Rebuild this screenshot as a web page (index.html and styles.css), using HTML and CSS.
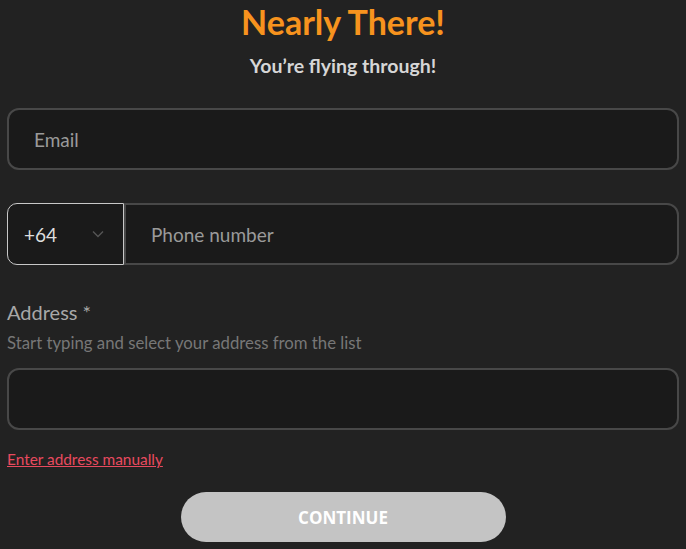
FILE: index.html
```html
<!DOCTYPE html>
<html lang="en">
<head>
    <meta charset="UTF-8">
    <meta name="viewport" content="width=device-width, initial-scale=1.0">
    <title>Nearly There</title>
    <link rel="stylesheet" href="styles.css">
</head>
<body>
    <div class="form-wrap">
        <h1 class="title">Nearly There!</h1>
        <p class="subtitle">You’re flying through!</p>

        <div class="field">
            <input class="text-input" type="email" placeholder="Email">
        </div>

        <div class="phone-row">
            <div class="country">
                <span>+64</span>
                <svg class="chevron" width="12" height="8" viewBox="0 0 12 8"><path d="M1 1.5 L6 6.5 L11 1.5" fill="none" stroke="#555" stroke-width="1.4"/></svg>
            </div>
            <input class="text-input phone-input" type="tel" placeholder="Phone number">
        </div>

        <div class="address">
            <label class="label">Address *</label>
            <div class="hint">Start typing and select your address from the list</div>
            <input class="text-input" type="text">
            <a class="manual-link" href="#">Enter address manually</a>
        </div>

        <div class="actions">
            <button class="continue-btn">CONTINUE</button>
        </div>
    </div>
</body>
</html>
```

FILE: styles.css
```css
body {
    margin: 0;
    background: #222222;
    font-family: 'Lato', sans-serif;
    color: #aaa;
}

.form-wrap {
    padding: 0 7px;
}

.title {
    margin: 0;
    padding-top: 2px;
    text-align: center;
    color: #f7931e;
    font-size: 34px;
    font-weight: 700;
    line-height: 40px;
}

.subtitle {
    margin: 12px 0 0;
    text-align: center;
    color: #d6d6d6;
    font-size: 19.5px;
    font-weight: 700;
    line-height: 24px;
}

.field {
    margin-top: 30px;
}

.text-input {
    display: block;
    box-sizing: border-box;
    width: 100%;
    height: 62px;
    padding: 0 25px;
    background: #1a1a1a;
    border: 2px solid #484848;
    border-radius: 12px;
    color: #ddd;
    font-family: inherit;
    font-size: 19px;
    outline: none;
}

.text-input::placeholder {
    color: #9a9a9a;
}

.phone-row {
    display: flex;
    margin-top: 33px;
}

.country {
    display: flex;
    align-items: center;
    justify-content: space-between;
    box-sizing: border-box;
    width: 117px;
    height: 62px;
    padding: 0 19px 0 16px;
    background: #1a1a1a;
    border: 1px solid #c8c8c8;
    border-radius: 10px 0 0 10px;
    color: #dedede;
    font-size: 19px;
}

.phone-input {
    flex: 1;
    border-radius: 0 12px 12px 0;
}

.address {
    margin-top: 35px;
}

.label {
    display: block;
    font-size: 20px;
    color: #a8a8a8;
    line-height: 24px;
}

.hint {
    margin-top: 9px;
    font-size: 16.75px;
    color: #777;
    line-height: 20px;
}

.address .text-input {
    margin-top: 15px;
}

.manual-link {
    display: inline-block;
    margin-top: 19px;
    color: #e84a5f;
    font-size: 15.4px;
    line-height: 20px;
}

.actions {
    display: flex;
    justify-content: center;
    margin-top: 23px;
}

.continue-btn {
    width: 325px;
    height: 50px;
    border: none;
    border-radius: 25px;
    background: #c4c4c4;
    color: #fff;
    font-family: 'Open Sans', sans-serif;
    font-size: 17px;
    font-weight: 700;
}
```
